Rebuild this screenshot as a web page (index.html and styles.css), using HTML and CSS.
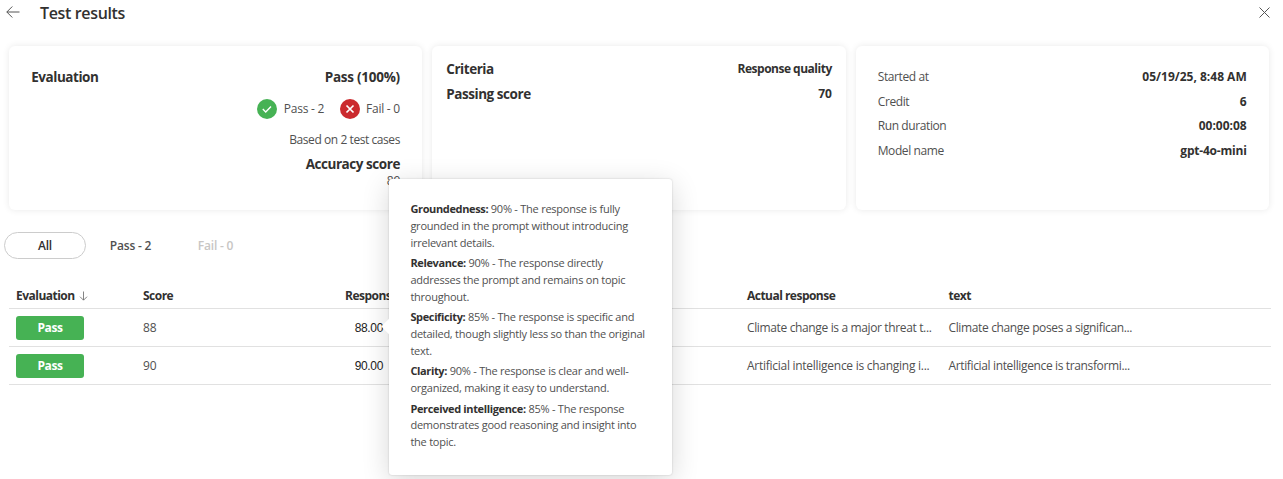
FILE: index.html
```html
<!DOCTYPE html>
<html lang="en">
<head>
<meta charset="utf-8">
<title>Test results</title>
<link rel="stylesheet" href="styles.css">
</head>
<body>
<header class="topbar">
  <svg class="back" width="14" height="12" viewBox="0 0 14 12"><path d="M13.5 6H.8M6.3.5.8 6l5.500 5.500"/></svg>
  <h1>Test results</h1>
  <svg class="close" width="11" height="11" viewBox="0 0 11 11"><path d="M.5.500l10 10M10.500.500l-10 10"/></svg>
</header>
<section class="cards">
  <div class="card evaluation">
    <div class="row head"><b>Evaluation</b><b class="percent">Pass (100%)</b></div>
    <div class="badges">
      <svg width="20" height="20" viewBox="0 0 20 20"><circle cx="10" cy="10" r="10" fill="#46b254"/><path d="M5.800 10.100l2.900 2.800 5.300-5.500"/></svg>
      <span>Pass - 2</span>
      <svg class="fail" width="20" height="20" viewBox="0 0 20 20"><circle cx="10" cy="10" r="10" fill="#cb2a2e"/><path d="M6.500 6.500l7 7M13.500 6.500l-7 7"/></svg>
      <span>Fail - 0</span>
    </div>
    <div class="based">Based on 2 test cases</div>
    <div class="accuracy"><b>Accuracy score</b></div>
    <div class="accuracy-value">89</div>
  </div>
  <div class="card criteria">
    <div class="row"><b>Criteria</b><b class="value">Response quality</b></div>
    <div class="row"><b>Passing score</b><b class="value number">70</b></div>
  </div>
  <div class="card details">
    <div class="row"><span>Started at</span><b>05/19/25, 8:48 AM</b></div>
    <div class="row"><span>Credit</span><b>6</b></div>
    <div class="row"><span>Run duration</span><b>00:00:08</b></div>
    <div class="row"><span>Model name</span><b class="model">gpt-4o-mini</b></div>
  </div>
</section>
<nav class="tabs">
  <span class="tab active">All</span>
  <span class="tab">Pass - 2</span>
  <span class="tab disabled">Fail - 0</span>
</nav>
<main class="table">
  <div class="tr th">
    <span class="sort">Evaluation<svg width="9" height="10" viewBox="0 0 9 10"><path d="M4.500.500v8.500M1 5.700 4.500 9.200 8 5.700"/></svg></span>
    <span>Score</span><span>Response</span>
    <span>Actual response</span><span>text</span>
  </div>
  <div class="tr">
    <span class="pill">Pass</span><span>88</span><span class="num">88.00</span>
    <span class="text">Climate change is a major threat t...</span><span class="text">Climate change poses a significan...</span>
  </div>
  <div class="tr">
    <span class="pill">Pass</span><span>90</span><span class="num">90.00</span>
    <span class="text narrow">Artificial intelligence is changing i...</span><span class="text">Artificial intelligence is transformi...</span>
  </div>
</main>
<aside class="callout">
  <p><b>Groundedness:</b> 90% - The response is fully<br>grounded in the prompt without introducing<br>irrelevant details.</p>
  <p><b>Relevance:</b> 90% - The response directly<br>addresses the prompt and remains on topic<br>throughout.</p>
  <p><b>Specificity:</b> 85% - The response is specific and<br>detailed, though slightly less so than the original<br>text.</p>
  <p><b>Clarity:</b> 90% - The response is clear and well-<br>organized, making it easy to understand.</p>
  <p><b>Perceived intelligence:</b> 85% - The response<br>demonstrates good reasoning and insight into<br>the topic.</p>
</aside>
</body>
</html>
```

FILE: styles.css
```css
* { box-sizing: border-box; }
body { margin: 0; height: 479px; overflow: hidden; position: relative; background: #fff; color: #505050; font: 12px/18px "Open Sans", "Noto Sans", sans-serif; white-space: nowrap; }
b { font-weight: 700; color: #323130; }
svg { flex: none; fill: none; }
.topbar { height: 45.500px; display: flex; align-items: flex-start; padding: 0 13px 0 6px; }
.back { margin-top: 6px; stroke: #555; }
.close { margin: 7px 0 0 auto; stroke: #555; }
h1 { margin: 0 0 0 20px; padding-top: 1px; font-size: 16px; line-height: 24px; font-weight: 600; letter-spacing: -.35px; color: #323130; }
.cards { display: grid; grid-template-columns: repeat(3, 1fr); gap: 10px; margin: 0 14px 0 9.200px; }
.card { height: 164.500px; border-radius: 6px; background: #fff; box-shadow: 0 0 7px rgba(0, 0, 0, .09); }
.row { display: flex; justify-content: space-between; }
.evaluation { padding: 21.400px 22.500px 0 22px; text-align: right; }
.evaluation .head, .accuracy { font-size: 13.500px; line-height: 20px; letter-spacing: -.45px; }
.evaluation .head .percent { letter-spacing: -.25px; }
.badges { display: flex; justify-content: flex-end; align-items: center; margin-top: 12.100px; height: 20px; letter-spacing: -.25px; }
.badges span { margin-left: 6.500px; padding-top: 1px; }
.badges svg { stroke: #fff; stroke-width: 1.4; }
.badges circle { stroke: none; }
.badges .fail { margin-left: 15.500px; stroke-width: 1.700; }
.based { margin-top: 12px; letter-spacing: -.43px; }
.accuracy { margin-top: 5px; }
.accuracy-value { margin-top: -2px; letter-spacing: -.3px; }
.criteria { padding: 13.400px 14px 0 13.800px; font-size: 13.500px; line-height: 20px; letter-spacing: -.45px; }
.criteria .row { height: 24.700px; }
.criteria .value { font-size: 12px; line-height: 19px; letter-spacing: -.5px; }
.criteria .value.number { letter-spacing: -.1px; }
.details { padding: 22.400px 22.300px 0 22px; }
.details .row { height: 24.700px; }
.details span { letter-spacing: -.4px; }
.details .model { letter-spacing: -.2px; }
.tabs { display: flex; margin: 22px 0 0 4px; font-weight: 600; line-height: 28px; letter-spacing: -.2px; }
.tab { width: 85px; height: 27px; text-align: center; }
.tab:nth-child(2) { margin-left: 2px; }
.tab.active { width: 82px; line-height: 26px; border: 1px solid #ccc; border-radius: 14px; color: #323130; }
.tab.disabled { color: #c8c6c4; }
.table { margin: 23px 12px 0 9px; }
.tr { height: 38px; display: grid; grid-template-columns: 127px 202px 402px 201.500px 1fr; align-items: center; padding-left: 7px; border-bottom: 1px solid #e1e1e1; }
.th { height: 27px; padding-top: 2px; font-weight: 700; letter-spacing: -.52px; color: #323130; }
.sort { display: flex; align-items: center; gap: 4px; }
.sort svg { stroke: #666; stroke-width: .8; }
.text { letter-spacing: -.36px; }
.text.narrow { letter-spacing: -.27px; }
.pill { width: 68px; height: 24px; line-height: 24px; border-radius: 3px; background: #46b254; color: #fff; font-weight: 700; letter-spacing: -.4px; text-align: center; }
.num { width: 38px; padding-top: 1px; text-align: right; letter-spacing: -.35px; color: #222; font-family: "Liberation Sans", sans-serif; }
.callout { position: absolute; left: 389px; top: 179px; width: 283px; height: 296px; padding: 22px 21.400px; border-radius: 3px; background: #fff; box-shadow: 0 0 2px rgba(0, 0, 0, .2), 0 6px 28px rgba(0, 0, 0, .16); font-size: 11px; line-height: 16.800px; letter-spacing: -.24px; }
.callout::before { content: ""; position: absolute; left: -5px; top: 141px; width: 13px; height: 13px; background: #fff; transform: rotate(45deg); }
.callout p { position: relative; margin: 0 0 3.700px; }
.callout b { letter-spacing: -.36px; }
```
